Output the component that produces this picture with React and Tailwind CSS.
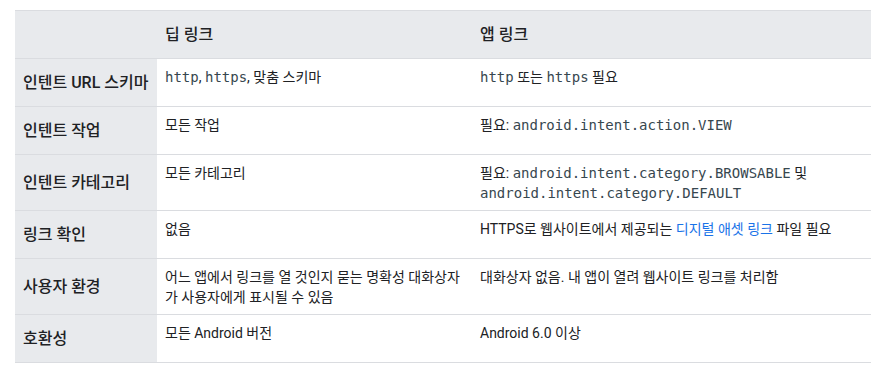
import React from "react";

const sans = { fontFamily: "Roboto, 'Noto Sans CJK KR', sans-serif" };

function C({ children }) {
  return (
    <code className="text-[14px] text-[#37474f]" style={{ fontFamily: "'DejaVu Sans Mono', 'Noto Sans CJK KR', monospace" }}>
      {children}
    </code>
  );
}

const rows = [
  {
    h: "인텐트 URL 스키마",
    a: (<><C>http</C>, <C>https</C>, 맞춤 스키마</>),
    b: (<><C>http</C> 또는 <C>https</C> 필요</>),
  },
  {
    h: "인텐트 작업",
    a: "모든 작업",
    b: (<>필요: <C>android.intent.action.VIEW</C></>),
  },
  {
    h: "인텐트 카테고리",
    a: "모든 카테고리",
    b: (<>필요: <C>android.intent.category.BROWSABLE</C> 및<br /><C>android.intent.category.DEFAULT</C></>),
  },
  {
    h: "링크 확인",
    a: "없음",
    b: (<>HTTPS로 웹사이트에서 제공되는 <span className="text-[#1a73e8]">디지털 애셋 링크</span> 파일 필요</>),
  },
  {
    h: "사용자 환경",
    a: (<>어느 앱에서 링크를 열 것인지 묻는 명확성 대화상자<br />가 사용자에게 표시될 수 있음</>),
    b: "대화상자 없음. 내 앱이 열려 웹사이트 링크를 처리함",
  },
  {
    h: "호환성",
    a: "모든 Android 버전",
    b: "Android 6.0 이상",
  },
];

export default function App() {
  return (
    <div className="bg-white w-[889px] h-[373px] pl-[15px] pt-[10px]" style={sans}>
      <div className="w-[856px] border-t border-[#dadce0] text-[#202124]">
        <div className="grid grid-cols-[142px_315px_399px] bg-[#e8eaed] h-[48px] items-center border-b border-[#dadce0] text-[16px] font-medium">
          <div />
          <div className="px-2">딥 링크</div>
          <div className="px-2">앱 링크</div>
        </div>
        {rows.map((r, i) => (
          <div key={i} className="grid grid-cols-[142px_315px_399px] border-b border-[#dadce0]">
            <div className="bg-[#e8eaed] px-2 flex items-center min-h-[47px] text-[16px] font-medium leading-[23px]">
              {r.h}
            </div>
            <div className="px-2 pt-2 pb-[7px] text-[14px] leading-[20px]">{r.a}</div>
            <div className="px-2 pt-2 pb-[7px] text-[14px] leading-[20px]">{r.b}</div>
          </div>
        ))}
      </div>
    </div>
  );
}
